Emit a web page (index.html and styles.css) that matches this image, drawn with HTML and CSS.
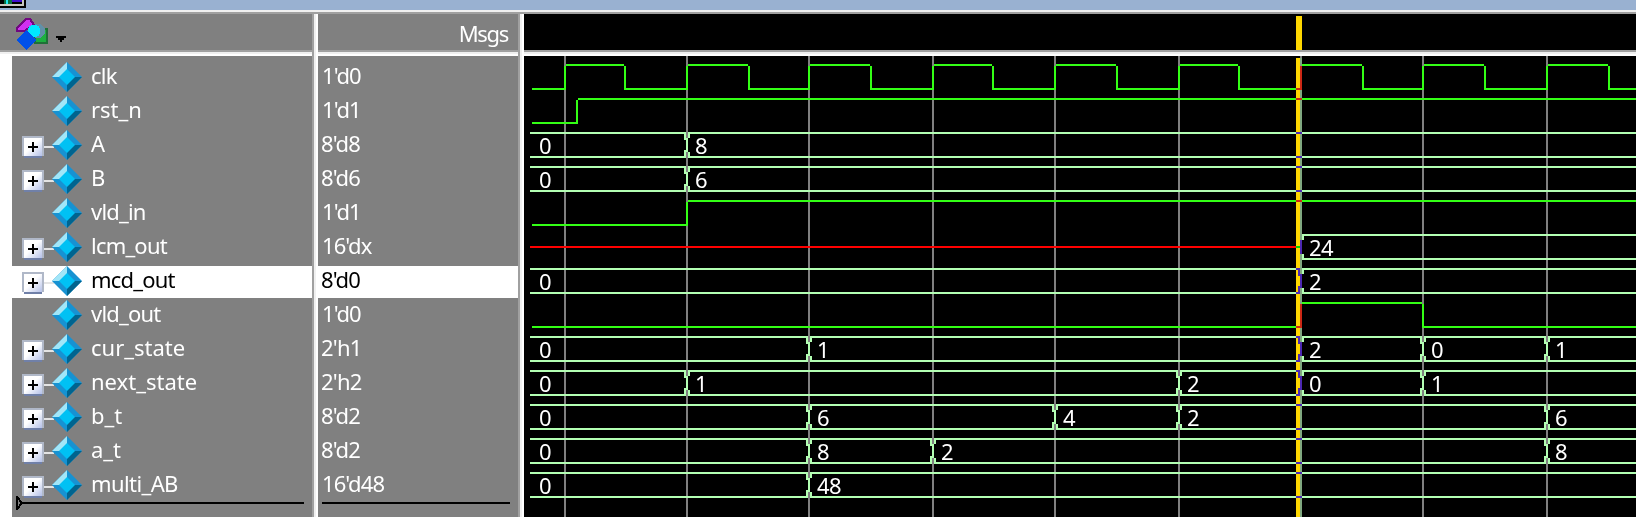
FILE: index.html
```
<!DOCTYPE html>
<html lang="en">
<head>
<meta charset="utf-8">
<title>Wave</title>
<link rel="stylesheet" href="styles.css">
</head>
<body>
<svg class="defs" width="0" height="0">
  <symbol id="gem" viewBox="0 0 30 30">
    <path fill="#1792d2" d="M15 0L30 15L15 30L0 15Z"/>
    <path fill="#a2e6f8" d="M15 0V8L8 15H0Z"/>
    <path fill="#00648f" d="M15 30V22L22 15H30Z"/>
    <path fill="#00c1f4" d="M15 7L23 15L15 23L7 15Z"/>
  </symbol>
  <symbol id="plus" viewBox="0 0 32 22">
    <path fill="#e4e4e4" d="M22 10H32V12H22Z"/>
    <path fill="#b0b8c8" d="M0 0H22V20H20V22H2V20H0Z"/>
    <path fill="#7080a8" d="M2 20H20V22H2Z"/>
    <path fill="url(#face)" d="M2 2H20V20H2Z"/>
    <path fill="#000" d="M6 10H10V6H12V10H16V12H12V16H10V12H6Z"/>
  </symbol>
  <linearGradient id="face" x1="0" y1="0" x2="1" y2="1">
    <stop offset=".45" stop-color="#fff"/><stop offset="1" stop-color="#b4c0e8"/>
  </linearGradient>
</svg>
<div class="window">
  <div class="titlebar">
    <svg width="26" height="8" shape-rendering="crispEdges">
      <path fill="#000" d="M0 0H26V8H0Z"/><path fill="#c8c8c0" d="M0 0H24V6H0Z"/><path fill="#000" d="M0 0H22V4H0Z"/>
      <path fill="#087040" d="M4 0H12V4H4Z"/><path fill="#20e8f0" d="M6 0H8V4H6Z"/><path fill="#4010d0" d="M12 0H22V2H12Z"/>
    </svg>
  </div>
  <div class="panes">
    <section class="pane names">
      <header class="head">
        <svg class="tool" width="52" height="36" viewBox="16 14 52 36" shape-rendering="crispEdges">
          <path fill="#1db040" stroke="#207038" stroke-width="2" d="M35 29H47V43H35Z"/>
          <path fill="#d030f0" stroke="#700880" stroke-width="2" d="M26 19H30L34 25L24 31H17V28Z"/>
          <circle cx="38" cy="31" r="7" fill="#6090a8"/>
          <circle cx="34" cy="31" r="6.5" fill="#00e8ff"/>
          <path fill="#0050e8" d="M26 30L36 40L26 50L16 40Z"/>
          <path fill="#000" d="M56 36H66V38H64V40H62V42H60V40H58V38H56Z"/>
        </svg>
      </header>
      <ul class="rows">
        <li><i></i><svg class="gem"><use href="#gem"/></svg><span>clk</span></li>
        <li><i></i><svg class="gem"><use href="#gem"/></svg><span class="loose">rst_n</span></li>
        <li><svg class="plus"><use href="#plus"/></svg><svg class="gem"><use href="#gem"/></svg><span>A</span></li>
        <li><svg class="plus"><use href="#plus"/></svg><svg class="gem"><use href="#gem"/></svg><span>B</span></li>
        <li><i></i><svg class="gem"><use href="#gem"/></svg><span>vld_in</span></li>
        <li><svg class="plus"><use href="#plus"/></svg><svg class="gem"><use href="#gem"/></svg><span>lcm_out</span></li>
        <li class="selected"><svg class="plus"><use href="#plus"/></svg><svg class="gem"><use href="#gem"/></svg><span>mcd_out</span></li>
        <li><i></i><svg class="gem"><use href="#gem"/></svg><span>vld_out</span></li>
        <li><svg class="plus"><use href="#plus"/></svg><svg class="gem"><use href="#gem"/></svg><span class="loose">cur_state</span></li>
        <li><svg class="plus"><use href="#plus"/></svg><svg class="gem"><use href="#gem"/></svg><span class="loose">next_state</span></li>
        <li><svg class="plus"><use href="#plus"/></svg><svg class="gem"><use href="#gem"/></svg><span class="loose">b_t</span></li>
        <li><svg class="plus"><use href="#plus"/></svg><svg class="gem"><use href="#gem"/></svg><span class="loose">a_t</span></li>
        <li><svg class="plus"><use href="#plus"/></svg><svg class="gem"><use href="#gem"/></svg><span class="tight">multi_AB</span></li>
      </ul>
      <svg class="insert" width="288" height="14" shape-rendering="crispEdges">
        <path d="M6 6H288V8H6Z"/><path fill="none" stroke="#000" stroke-width="2" d="M1 0V14M1 1L6 7L1 13"/>
      </svg>
    </section>
    <div class="splitter"></div>
    <section class="pane values">
      <header class="head"><span>Msgs</span></header>
      <ul class="rows">
        <li class="one">1'd0</li><li class="one">1'd1</li><li>8'd8</li><li>8'd6</li><li class="one">1'd1</li><li class="one">16'dx</li>
        <li class="selected">8'd0</li><li class="one">1'd0</li><li>2'h1</li><li>2'h2</li><li>8'd2</li><li>8'd2</li><li class="one">16'd48</li>
      </ul>
      <div class="rule"></div>
    </section>
    <div class="splitter"></div>
    <section class="pane waves">
      <header class="head"><div class="marker"></div></header>
      <svg id="wave" width="1112" height="461" viewBox="524 56 1112 461" shape-rendering="crispEdges"></svg>
    </section>
  </div>
</div>
<script src="wave.js"></script>
</body>
</html>
```
FILE: styles.css
```
* { box-sizing: border-box; }
body {
  margin: 0;
  background: #fff;
  font-family: "Noto Sans", "Open Sans", sans-serif;
  font-size: 22px;
  color: #fff;
}
.defs { position: absolute; }
.window { width: 1636px; height: 517px; overflow: hidden; display: flex; flex-direction: column; }
.titlebar { height: 14px; background: #99b1d1; border-bottom: 2px solid #a0a0a0; box-shadow: inset 0 -2px #f0f0f0; }
.titlebar svg { display: block; }
.panes { flex: 1; display: flex; min-height: 0; }
.pane { display: flex; flex-direction: column; background: #808080; }
.pane.names { width: 312px; background: linear-gradient(90deg, #fff 12px, #808080 12px); }
.values { width: 200px; }
.pane.waves { width: 1112px; background: #000; }
.splitter {
  width: 6px;
  background: linear-gradient(90deg, #a0a0a0 2px, #f0f0f0 2px 4px, #fff 4px);
}
.head {
  height: 42px;
  flex: none;
  display: flex;
  padding-bottom: 6px;
  background: linear-gradient(transparent 36px, #a0a0a0 36px 38px, #f0f0f0 38px 40px, #fff 40px);
}
.names .head { background-color: #808080; }
.tool { margin-left: 16px; }
.values .head { justify-content: flex-end; padding-right: 10px; line-height: 39px; letter-spacing: -1.3px; }
.marker { width: 6px; height: 34px; margin: 2px 0 0 772px; background: #ffd700; }
.rows { list-style: none; margin: 0; padding: 6px 0 0; }
.rows li { height: 32px; margin-bottom: 2px; line-height: 26px; white-space: nowrap; display: flex; }
.names .rows { border-left: 12px solid #fff; }
.names li { padding-left: 10px; letter-spacing: -.8px; }
.names li i { width: 30px; }
.names .plus { width: 32px; height: 22px; margin: 6px -2px 0 0; }
.names .gem { width: 30px; height: 30px; }
.names span { margin-left: 9px; }
.names .loose { letter-spacing: 0; }
.names .tight { letter-spacing: -.6px; }
.rows .selected { background: #fff; color: #000; }
.insert { margin: -8px 0 0 16px; }
.values li { padding-left: 3px; letter-spacing: -.8px; }
.values .one { padding-left: 4px; letter-spacing: -.9px; }
.rule { width: 188px; height: 2px; margin: -2px 0 0 4px; background: #000; }
#wave { display: block; }
.grid { fill: #808080; }
.grid-cursor { fill: #7f2f80; }
.bit { fill: #33ff15; }
.bus { fill: #b3ffb3; }
.unknown { fill: #f00; }
.cursor { fill: #ffd700; mix-blend-mode: difference; }
.label { fill: #fff; font-size: 22px; letter-spacing: -.6px; }
```
FILE: wave.js
```
const svg = document.getElementById("wave");
const NS = "http://www.w3.org/2000/svg";
const END = 1636, CURSOR = 1301;
const edges = [565, 687, 809, 933, 1055, 1179, 1301, 1423, 1547];
const falls = [625, 749, 871, 993, 1117, 1239, 1363, 1485, 1609];

function rect(x1, y1, x2, y2, cls) {
  const r = document.createElementNS(NS, "rect");
  r.setAttribute("x", x1);
  r.setAttribute("y", y1);
  r.setAttribute("width", x2 - x1);
  r.setAttribute("height", y2 - y1);
  r.setAttribute("class", cls);
  svg.appendChild(r);
}

function label(x, row, text) {
  const t = document.createElementNS(NS, "text");
  t.setAttribute("x", x);
  t.setAttribute("y", 62 + 34 * row + 24);
  t.setAttribute("class", "label");
  t.textContent = text;
  svg.appendChild(t);
}

// Single-bit trace: starts low and toggles at each listed time.
function bit(row, times) {
  const y = 62 + 34 * row;
  let x = 532, high = false;
  for (const t of [...times, END + 1]) {
    const level = high ? 2 : 26;
    rect(x, y + level, high ? t - 1 : Math.min(t + 1, END), y + level + 2, "bit");
    if (t < END) rect(t - 1, y + 4, t + 1, y + 28, "bit");
    x = high ? t - 1 : t + 1;
    high = !high;
  }
}

// Bus trace: rails with a bracketed crossing at each value change.
function bus(row, changes, start = 530) {
  const y = 62 + 34 * row;
  rect(start, y + 2, END, y + 4, "bus");
  rect(start, y + 26, END, y + 28, "bus");
  if (start === 530) label(539, row, "0");
  for (const [t, text] of changes) {
    if (start < t) {
      rect(t - 3, y + 2, t - 1, y + 10, "bus");
      rect(t - 3, y + 20, t - 1, y + 28, "bus");
    }
    rect(t + 1, y + 2, t + 3, y + 8, "bus");
    rect(t + 1, y + 22, t + 3, y + 28, "bus");
    const grid = t === CURSOR ? "grid-cursor" : "grid";
    rect(t - 1, y + 2, t + 1, y + 8, grid);
    rect(t - 1, y + 8, t + 1, y + 22, "bus");
    rect(t - 1, y + 22, t + 1, y + 28, grid);
    label(t + 8, row, text);
  }
}

for (const x of edges) rect(x - 1, 56, x + 1, 517, x === CURSOR ? "grid-cursor" : "grid");
rect(1300, 56, 1302, 58, "grid");

bit(0, edges.flatMap((e, i) => [e, falls[i]]));
bit(1, [577]);
bus(2, [[687, "8"]]);
bus(3, [[687, "6"]]);
bit(4, [687]);
bus(5, [[1301, "24"]], 1302);
rect(530, 246, 1300, 248, "unknown");
bus(6, [[1301, "2"]]);
bit(7, [1301, 1423]);
bus(8, [[809, "1"], [1301, "2"], [1423, "0"], [1547, "1"]]);
bus(9, [[687, "1"], [1179, "2"], [1301, "0"], [1423, "1"]]);
bus(10, [[809, "6"], [1055, "4"], [1179, "2"], [1547, "6"]]);
bus(11, [[809, "8"], [933, "2"], [1547, "8"]]);
bus(12, [[809, "48"]]);
rect(1296, 58, 1302, 517, "cursor");
```
